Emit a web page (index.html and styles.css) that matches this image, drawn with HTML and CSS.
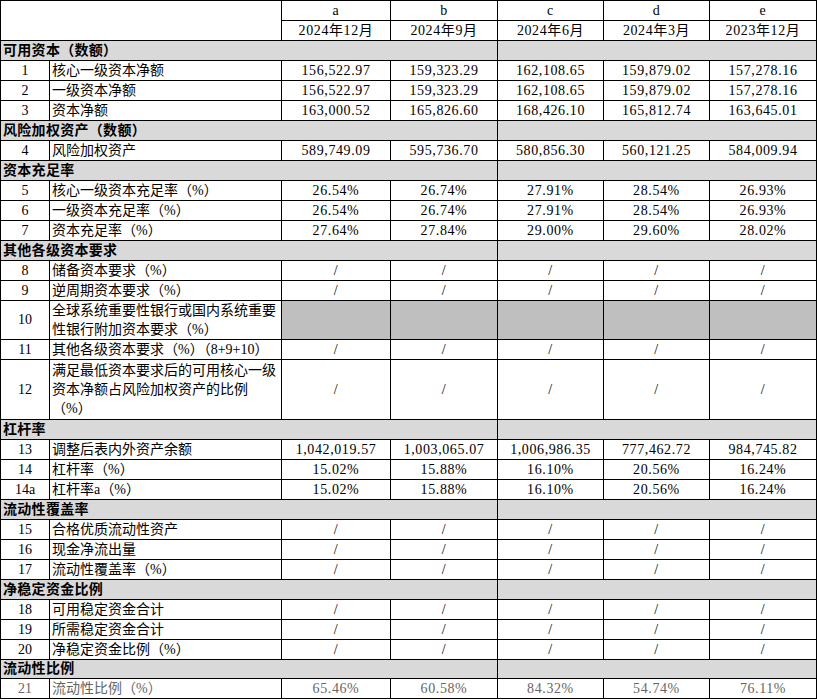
FILE: index.html
```html
<!DOCTYPE html>
<html lang="zh-CN">
<head>
<meta charset="utf-8">
<title>资本充足率等指标</title>
<link rel="stylesheet" href="styles.css">
</head>
<body>
<table class="sheet">
  <colgroup>
    <col class="c-no"><col class="c-label"><col class="c-a"><col class="c-b"><col class="c-c"><col class="c-d"><col class="c-e">
  </colgroup>
  <tbody>
    <tr class="r"><td class="blank" colspan="2" rowspan="2"></td><td class="v">a</td><td class="v">b</td><td class="v">c</td><td class="v">d</td><td class="v">e</td></tr>
    <tr class="r"><td class="v">2024年12月</td><td class="v">2024年9月</td><td class="v">2024年6月</td><td class="v">2024年3月</td><td class="v">2023年12月</td></tr>

    <tr class="r sec"><td colspan="4" class="sh">可用资本（数额）</td><td colspan="3"></td></tr>
    <tr class="r"><td class="no">1</td><td class="lb">核心一级资本净额</td><td class="v">156,522.97</td><td class="v">159,323.29</td><td class="v">162,108.65</td><td class="v">159,879.02</td><td class="v">157,278.16</td></tr>
    <tr class="r"><td class="no">2</td><td class="lb">一级资本净额</td><td class="v">156,522.97</td><td class="v">159,323.29</td><td class="v">162,108.65</td><td class="v">159,879.02</td><td class="v">157,278.16</td></tr>
    <tr class="r"><td class="no">3</td><td class="lb">资本净额</td><td class="v">163,000.52</td><td class="v">165,826.60</td><td class="v">168,426.10</td><td class="v">165,812.74</td><td class="v">163,645.01</td></tr>

    <tr class="r sec"><td colspan="4" class="sh">风险加权资产（数额）</td><td colspan="3"></td></tr>
    <tr class="r"><td class="no">4</td><td class="lb">风险加权资产</td><td class="v">589,749.09</td><td class="v">595,736.70</td><td class="v">580,856.30</td><td class="v">560,121.25</td><td class="v">584,009.94</td></tr>

    <tr class="r sec"><td colspan="4" class="sh">资本充足率</td><td colspan="3"></td></tr>
    <tr class="r"><td class="no">5</td><td class="lb">核心一级资本充足率（%）</td><td class="v">26.54%</td><td class="v">26.74%</td><td class="v">27.91%</td><td class="v">28.54%</td><td class="v">26.93%</td></tr>
    <tr class="r"><td class="no">6</td><td class="lb">一级资本充足率（%）</td><td class="v">26.54%</td><td class="v">26.74%</td><td class="v">27.91%</td><td class="v">28.54%</td><td class="v">26.93%</td></tr>
    <tr class="r"><td class="no">7</td><td class="lb">资本充足率（%）</td><td class="v">27.64%</td><td class="v">27.84%</td><td class="v">29.00%</td><td class="v">29.60%</td><td class="v">28.02%</td></tr>

    <tr class="r sec"><td colspan="4" class="sh">其他各级资本要求</td><td colspan="3"></td></tr>
    <tr class="r"><td class="no">8</td><td class="lb">储备资本要求（%）</td><td class="v">/</td><td class="v">/</td><td class="v">/</td><td class="v">/</td><td class="v">/</td></tr>
    <tr class="r"><td class="no">9</td><td class="lb">逆周期资本要求（%）</td><td class="v">/</td><td class="v">/</td><td class="v">/</td><td class="v">/</td><td class="v">/</td></tr>
    <tr class="r2"><td class="no">10</td><td class="lb">全球系统重要性银行或国内系统重要<br>性银行附加资本要求（%）</td><td class="shade"></td><td class="shade"></td><td class="shade"></td><td class="shade"></td><td class="shade"></td></tr>
    <tr class="r"><td class="no">11</td><td class="lb">其他各级资本要求（%）（8+9+10）</td><td class="v">/</td><td class="v">/</td><td class="v">/</td><td class="v">/</td><td class="v">/</td></tr>
    <tr class="r3"><td class="no">12</td><td class="lb">满足最低资本要求后的可用核心一级<br>资本净额占风险加权资产的比例<br>（%）</td><td class="v">/</td><td class="v">/</td><td class="v">/</td><td class="v">/</td><td class="v">/</td></tr>

    <tr class="r sec"><td colspan="4" class="sh">杠杆率</td><td colspan="3"></td></tr>
    <tr class="r"><td class="no">13</td><td class="lb">调整后表内外资产余额</td><td class="v">1,042,019.57</td><td class="v">1,003,065.07</td><td class="v">1,006,986.35</td><td class="v">777,462.72</td><td class="v">984,745.82</td></tr>
    <tr class="r"><td class="no">14</td><td class="lb">杠杆率（%）</td><td class="v">15.02%</td><td class="v">15.88%</td><td class="v">16.10%</td><td class="v">20.56%</td><td class="v">16.24%</td></tr>
    <tr class="r"><td class="no">14a</td><td class="lb">杠杆率a（%）</td><td class="v">15.02%</td><td class="v">15.88%</td><td class="v">16.10%</td><td class="v">20.56%</td><td class="v">16.24%</td></tr>

    <tr class="r sec"><td colspan="4" class="sh">流动性覆盖率</td><td colspan="3"></td></tr>
    <tr class="r"><td class="no">15</td><td class="lb">合格优质流动性资产</td><td class="v">/</td><td class="v">/</td><td class="v">/</td><td class="v">/</td><td class="v">/</td></tr>
    <tr class="r"><td class="no">16</td><td class="lb">现金净流出量</td><td class="v">/</td><td class="v">/</td><td class="v">/</td><td class="v">/</td><td class="v">/</td></tr>
    <tr class="r"><td class="no">17</td><td class="lb">流动性覆盖率（%）</td><td class="v">/</td><td class="v">/</td><td class="v">/</td><td class="v">/</td><td class="v">/</td></tr>

    <tr class="r sec"><td colspan="4" class="sh">净稳定资金比例</td><td colspan="3"></td></tr>
    <tr class="r"><td class="no">18</td><td class="lb">可用稳定资金合计</td><td class="v">/</td><td class="v">/</td><td class="v">/</td><td class="v">/</td><td class="v">/</td></tr>
    <tr class="r"><td class="no">19</td><td class="lb">所需稳定资金合计</td><td class="v">/</td><td class="v">/</td><td class="v">/</td><td class="v">/</td><td class="v">/</td></tr>
    <tr class="r"><td class="no">20</td><td class="lb">净稳定资金比例（%）</td><td class="v">/</td><td class="v">/</td><td class="v">/</td><td class="v">/</td><td class="v">/</td></tr>

    <tr class="r19 sec"><td colspan="4" class="sh">流动性比例</td><td colspan="3"></td></tr>
    <tr class="r last"><td class="no">21</td><td class="lb">流动性比例（%）</td><td class="v">65.46%</td><td class="v">60.58%</td><td class="v">84.32%</td><td class="v">54.74%</td><td class="v">76.11%</td></tr>
  </tbody>
</table>
</body>
</html>
```

FILE: styles.css
```css
html, body {
  margin: 0;
  padding: 0;
  background: #ffffff;
}

body {
  font-family: "Liberation Serif", "Noto Sans CJK SC", serif;
  font-size: 14px;
  color: #000000;
}

.sheet {
  border-collapse: collapse;
  table-layout: fixed;
  width: 816px;
}

.c-no { width: 49px; }
.c-label { width: 232px; }
.c-a { width: 109px; }
.c-b { width: 107px; }
.c-c { width: 106px; }
.c-d { width: 106px; }
.c-e { width: 107px; }

.sheet td {
  border: 1px solid #000000;
  padding: 0 2px;
  line-height: 18px;
  white-space: nowrap;
  overflow: hidden;
  vertical-align: middle;
}

.r td { height: 19px; }
.r19 td { height: 18px; }
.r2 td { height: 38px; }
.r3 td { height: 59px; }

.r2 .lb, .r3 .lb {
  white-space: normal;
  line-height: 19px;
}

.no {
  text-align: center;
}

.lb {
  text-align: left;
}

.v {
  text-align: center;
  letter-spacing: 0.6px;
}

.sec td {
  background: #d9d9d9;
}

.sh {
  font-weight: bold;
  padding-left: 3px;
  letter-spacing: 0.3px;
}

.shade {
  background: #bfbfbf;
}

.last td {
  color: #666666;
}
```
